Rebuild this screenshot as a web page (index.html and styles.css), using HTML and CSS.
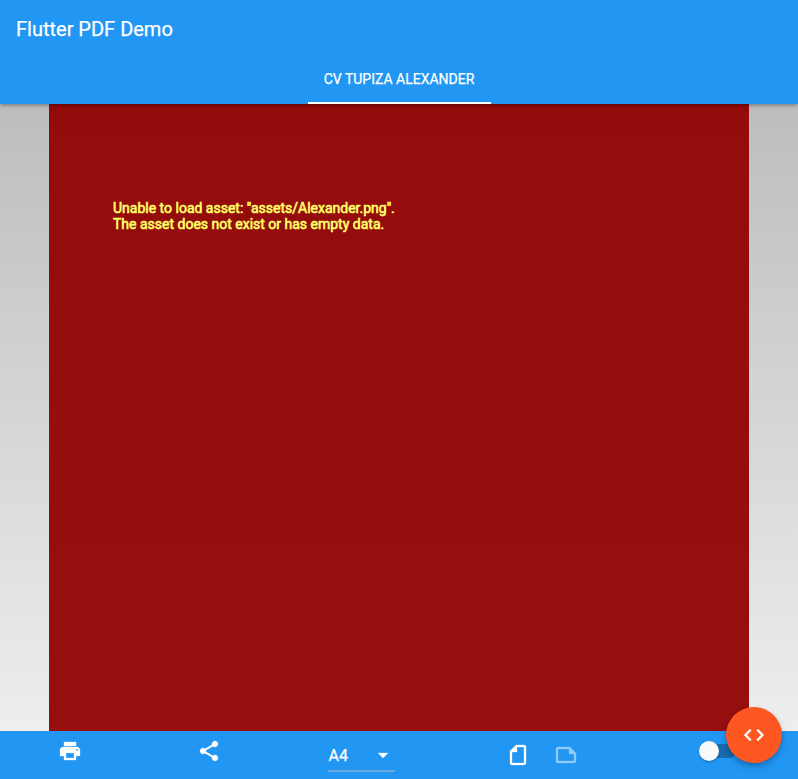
FILE: index.html
```html
<!DOCTYPE html>
<html lang="en">
<head>
<meta charset="utf-8">
<title>Flutter PDF Demo</title>
<link rel="stylesheet" href="styles.css">
</head>
<body>
<header class="appbar">
  <h1 class="title">Flutter PDF Demo</h1>
  <nav class="tabs"><a class="tab">CV TUPIZA ALEXANDER</a></nav>
</header>
<main class="preview">
  <section class="page">
    <p class="error">Unable to load asset: "assets/Alexander.png".<br>The asset does not exist or has empty data.</p>
  </section>
</main>
<footer class="toolbar">
  <button class="action print" aria-label="Print"><svg viewBox="0 0 24 24"><path d="M19 8H5c-1.66 0-3 1.34-3 3v6h4v4h12v-4h4v-6c0-1.66-1.34-3-3-3zm-3 11H8v-5h8v5zm3-7c-.55 0-1-.45-1-1s.45-1 1-1 1 .45 1 1-.45 1-1 1zm-1-9H6v4h12V3z"/></svg></button>
  <button class="action share" aria-label="Share"><svg viewBox="0 0 24 24"><path d="M18 16.08c-.76 0-1.44.3-1.96.77L8.91 12.7c.05-.23.09-.46.09-.7s-.04-.47-.09-.7l7.05-4.11c.54.5 1.25.81 2.04.81 1.66 0 3-1.34 3-3s-1.34-3-3-3-3 1.34-3 3c0 .24.04.47.09.7L8.04 9.81C7.5 9.31 6.79 9 6 9c-1.66 0-3 1.34-3 3s1.34 3 3 3c.79 0 1.5-.31 2.04-.81l7.12 4.16c-.05.21-.08.43-.08.65 0 1.61 1.31 2.92 2.92 2.92s2.92-1.31 2.92-2.92-1.31-2.92-2.92-2.92z"/></svg></button>
  <div class="select"><span>A4</span><svg viewBox="0 0 24 24"><path d="M7 10l5 5 5-5z"/></svg></div>
  <div class="orientation">
    <svg class="portrait" viewBox="0 0 24 24"><path d="M16 4H4c-1.1 0-2 .9-2 2v12.01c0 1.1.9 1.99 2 1.99h16c1.1 0 2-.9 2-2v-8l-6-6zM4 18.01V6h11v5h5v7.01H4z"/></svg>
    <svg class="landscape" viewBox="0 0 24 24"><path d="M16 4H4c-1.1 0-2 .9-2 2v12.01c0 1.1.9 1.99 2 1.99h16c1.1 0 2-.9 2-2v-8l-6-6zM4 18.01V6h11v5h5v7.01H4z"/></svg>
  </div>
  <div class="switch"><span class="thumb"></span></div>
</footer>
<button class="fab" aria-label="Code"><svg viewBox="0 0 24 24"><path d="M9.4 16.6L4.8 12l4.6-4.6L8 6l-6 6 6 6 1.4-1.4zm5.2 0l4.6-4.6-4.6-4.6L16 6l6 6-6 6-1.4-1.4z"/></svg></button>
</body>
</html>
```
FILE: styles.css
```css
* { box-sizing: border-box; }
body {
  margin: 0;
  height: 779px;
  display: flex;
  flex-direction: column;
  overflow: hidden;
  font-family: Roboto, sans-serif;
  color: #fff;
}
svg { display: block; width: 24px; height: 24px; fill: currentColor; stroke: currentColor; stroke-width: .3px; }
button { border: 0; padding: 0; background: none; color: inherit; }
.appbar {
  position: relative;
  z-index: 1;
  height: 104px;
  background: #2196f3;
  box-shadow: 0 2px 3px -1px rgba(0,0,0,.25), 0 2px 5px rgba(0,0,0,.14);
}
.title { margin: 0; padding-left: 16px; font-size: 20px; font-weight: 400; line-height: 58px; height: 56px; -webkit-text-stroke: .25px #fff; }
.tabs { display: flex; justify-content: center; }
.tab { height: 48px; width: 183px; text-align: center; border-bottom: 2px solid #fff; font-size: 14px; line-height: 47px; -webkit-text-stroke: .25px #fff; }
.preview {
  height: 627px;
  display: flex;
  justify-content: center;
  background: linear-gradient(#bdbdbd, #eee);
}
.page { width: 700px; padding: 96px 64px; background: rgba(144,0,0,.94); }
.error {
  margin: 0;
  font-size: 14px;
  line-height: 16px;
  color: #ff6;
  -webkit-text-stroke: .6px #ff6;
}
.toolbar {
  height: 48px;
  display: flex;
  align-items: flex-start;
  background: #2196f3;
}
.action { margin-top: 8px; }
.print { margin-left: 57.5px; }
.share { margin-left: 115.5px; }
.select {
  margin: 9px 0 0 107px;
  width: 67px;
  height: 32px;
  display: flex;
  align-items: center;
  justify-content: space-between;
  padding: 0 .5px;
  border-bottom: 2px solid #6da7dc;
  font-size: 16px;
  -webkit-text-stroke: .25px #fff;
}
.orientation { display: flex; gap: 24px; margin: 12px 0 0 111px; }
.portrait { transform: rotate(-90deg); }
.landscape { opacity: .5; }
.switch { display: flex; width: 33px; height: 14px; margin: 13px 0 0 125px; border-radius: 7px; background: #176baf; }
.thumb {
  width: 20px;
  height: 20px;
  margin: -3px 0 0 -4px;
  border-radius: 50%;
  background: #fafafa;
  box-shadow: 0 1px 2px rgba(0,0,0,.3);
}
.fab {
  position: absolute;
  right: 16px;
  bottom: 16px;
  z-index: 2;
  width: 56px;
  height: 56px;
  display: flex;
  align-items: center;
  justify-content: center;
  border-radius: 50%;
  background: #ff5722;
  box-shadow: 0 3px 5px -1px rgba(0,0,0,.2), 0 4px 8px rgba(0,0,0,.14);
}
```
